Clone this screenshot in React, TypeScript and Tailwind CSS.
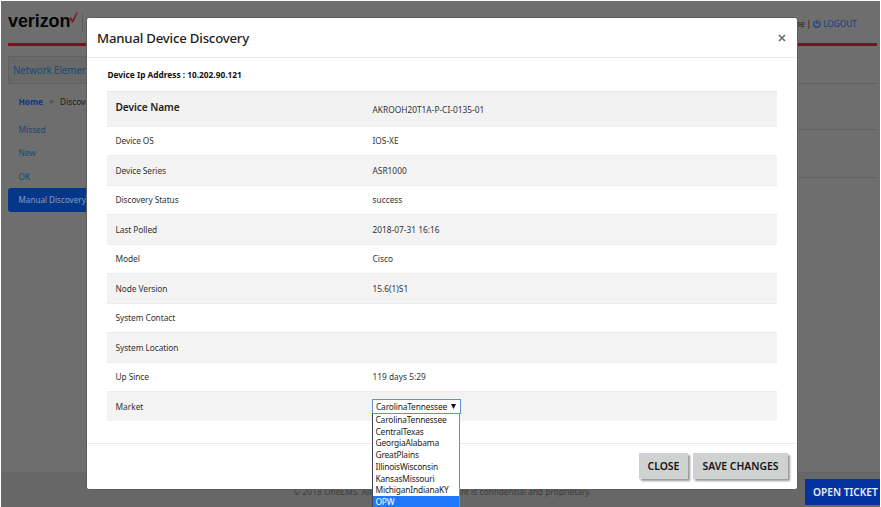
const rows: [string, string][] = [
  ["Device OS", "IOS-XE"],
  ["Device Series", "ASR1000"],
  ["Discovery Status", "success"],
  ["Last Polled", "2018-07-31 16:16"],
  ["Model", "Cisco"],
  ["Node Version", "15.6(1)S1"],
  ["System Contact", ""],
  ["System Location", ""],
  ["Up Since", "119 days 5:29"],
];

const markets = [
  "CarolinaTennessee",
  "CentralTexas",
  "GeorgiaAlabama",
  "GreatPlains",
  "IllinoisWisconsin",
  "KansasMissouri",
  "MichiganIndianaKY",
  "OPW",
];

function PowerIcon() {
  return (
    <svg className="mr-[2px] h-[8px] w-[8px]" viewBox="0 0 16 16" fill="none" stroke="currentColor" strokeWidth="2.4" strokeLinecap="round">
      <path d="M8 1.2v6" />
      <path d="M4.2 3.4a6.2 6.2 0 1 0 7.6 0" />
    </svg>
  );
}

function Background() {
  return (
    <div className="flex h-full flex-col bg-[#6e6e6e]">
      <header className="ml-[7px] mr-[3px] flex h-[45px] items-start justify-between border-b-[3px] border-[#7d1020]">
        <div className="flex items-start pt-[10px]">
          <span className="font-['Liberation_Sans',Arial,sans-serif] text-[18px] font-bold leading-[21px] tracking-[-0.1px] text-[#050505]">verizon</span>
          <svg className="-ml-px mt-px h-[11px] w-[9px]" viewBox="0 0 9 11">
            <path d="M0.3 6 L2 5.2 L3.6 8 L7.4 0.6 L8.8 0.6 L4.2 10.4 L3.1 10.4 Z" fill="#8b0d1c" />
          </svg>
          <span className="ml-[4px] mt-[3px] h-[17px] w-px bg-[#5b5b5b]" />
        </div>
        <div className="flex items-center pr-[20px] pt-[16px] text-[8.3px] leading-[14px] text-[#1c1c1c]">
          <span className="whitespace-pre tracking-[-0.1px]">John Doe | </span>
          <span className="flex items-center text-[#123f8c]">
            <PowerIcon />
            LOGOUT
          </span>
        </div>
      </header>
      <div className="ml-[7px] mr-[3px] mt-[10px] flex h-[28px] border-b border-[#616161]">
        <div className="flex w-[150px] items-center border-l border-t border-[#616161] bg-[#696969] px-[4px] text-[9.9px] text-[#174a72]">
          <span className="whitespace-nowrap tracking-[-0.15px]">Network Elements</span>
        </div>
      </div>
      <div className="flex flex-1">
        <div className="ml-[7px] flex w-[150px] flex-col text-[8.3px] text-[#174a72]">
          <div className="mb-[5px] mt-[9px] flex h-[19px] items-center whitespace-pre pl-[10.5px] text-[#1c1c1c]">
            <b className="text-[#063a8c]">Home</b>
            <span className="px-[6.5px] text-[7px] text-[#333]">&gt;</span>
            <span>Discovery</span>
          </div>
          <div className="flex h-[23.5px] items-center pl-[10.5px] pt-[2px]">Missed</div>
          <div className="flex h-[23.5px] items-center pl-[10.5px] pt-[2px]">New</div>
          <div className="flex h-[23.5px] items-center pl-[10.5px] pt-[2px]">OK</div>
          <div className="flex h-[24px] items-center rounded-[3px] bg-[#04378a] pl-[10.5px] pt-px text-[8.1px] text-[#8b9cb8]">Manual Discovery</div>
        </div>
        <div className="mr-[3px] flex flex-1 flex-col">
          <div className="h-[46px] border-b border-[#626262]" />
          <div className="h-[48px] border-b border-[#626262]" />
        </div>
      </div>
      <footer className="flex h-[35px] items-center justify-center border-t border-[#646464] bg-[#676767] pt-[5px] text-[8.4px] text-[#3c3c3c]">
        <span className="whitespace-nowrap pl-[4px]">© 2018 OneEMS. All rights reserved. Content is confidential and proprietary.</span>
      </footer>
    </div>
  );
}

function MarketSelect() {
  return (
    <div className="relative w-[89px] text-[8.4px] tracking-[-0.17px] text-[#222]">
      <div className="flex h-[15px] items-center justify-between border border-[#5e8fe0] bg-white pl-[3px] pr-[4px] pt-px">
        <span>CarolinaTennessee</span>
        <svg className="h-[5px] w-[5px]" viewBox="0 0 5 5">
          <path d="M0 0h5L2.5 5z" fill="#111" />
        </svg>
      </div>
      <ul className="absolute left-0 top-[14px] z-10 w-[88px] border border-b-0 border-[#5e8fe0] border-l-[#39455c] bg-white">
        {markets.map((m) => (
          <li key={m} className={`h-[11.75px] pl-[2.5px] leading-[12px] ${m === "OPW" ? "bg-[#1e78fa] text-white" : ""}`}>
            {m}
          </li>
        ))}
      </ul>
    </div>
  );
}

function Modal() {
  return (
    <section className="flex h-[473px] w-[712px] flex-col rounded-[3px] border border-[#5c5c5c] bg-white text-[#333]">
      <header className="flex h-[40px] shrink-0 items-center justify-between border-b border-[#e9ebee] pl-[10px] pr-[11px]">
        <h1 className="pt-[2px] text-[13.2px] font-medium tracking-[-0.2px] text-[#222]">Manual Device Discovery</h1>
        <svg className="h-[8px] w-[8px]" viewBox="0 0 8 8" stroke="#6f6f6f" strokeWidth="1.7">
          <path d="M1 1l6 6M7 1L1 7" />
        </svg>
      </header>
      <div className="h-[386px] shrink-0 border-b border-[#e9ebf2] px-[20px] pt-[10px]">
        <p className="mb-[10px] h-[13px] pl-[0.5px] text-[8.3px] font-bold leading-[13px] text-[#111]">Device Ip Address : 10.202.90.121</p>
        <div className="w-[670px] text-[8.35px]">
          <div className="flex h-[35px] items-center border-t border-[#e9e9e9] bg-[#f2f2f2] pl-[8.5px]">
            <span className="w-[257px] pb-[3px] text-[10.2px] font-semibold tracking-[-0.1px] text-[#222]">Device Name</span>
            <span className="pt-[2px]">AKROOH20T1A-P-CI-0135-01</span>
          </div>
          {rows.map(([label, value]) => (
            <div key={label} className="flex h-[29.45px] items-center border-t border-[#ececec] pl-[8.5px] pt-px even:bg-white odd:bg-[#f3f3f3]">
              <span className="w-[257px] tracking-[-0.08px]">{label}</span>
              <span>{value}</span>
            </div>
          ))}
          <div className="flex h-[30px] items-center border-t border-[#ececec] bg-[#f3f3f3] pl-[8.5px]">
            <span className="w-[256.5px] pt-px">Market</span>
            <MarketSelect />
          </div>
        </div>
      </div>
      <footer className="flex justify-end gap-[5px] pr-[9px] pt-[9px] text-[10.4px] font-semibold text-[#151515]">
        <button className="h-[26px] w-[49px] bg-[#cfd2d0] pt-[2px] shadow-[2px_2px_2px_#999]">CLOSE</button>
        <button className="h-[26px] w-[95px] whitespace-nowrap bg-[#cfd2d0] pt-[2px] shadow-[2px_2px_2px_#999]">SAVE CHANGES</button>
      </footer>
    </section>
  );
}

export default function App() {
  return (
    <div className="relative h-[507px] w-[881px] overflow-hidden border-x border-t border-white font-['Noto_Sans','Open_Sans',sans-serif]">
      <Background />
      <div className="absolute left-[85px] top-[16px]">
        <Modal />
      </div>
      <button className="absolute left-[804px] top-[478px] h-[26px] w-[82px] whitespace-nowrap bg-[#0432a0] pl-[8px] pt-px text-left text-[10.2px] font-semibold text-[#e8ecf8]">OPEN TICKET</button>
    </div>
  );
}
